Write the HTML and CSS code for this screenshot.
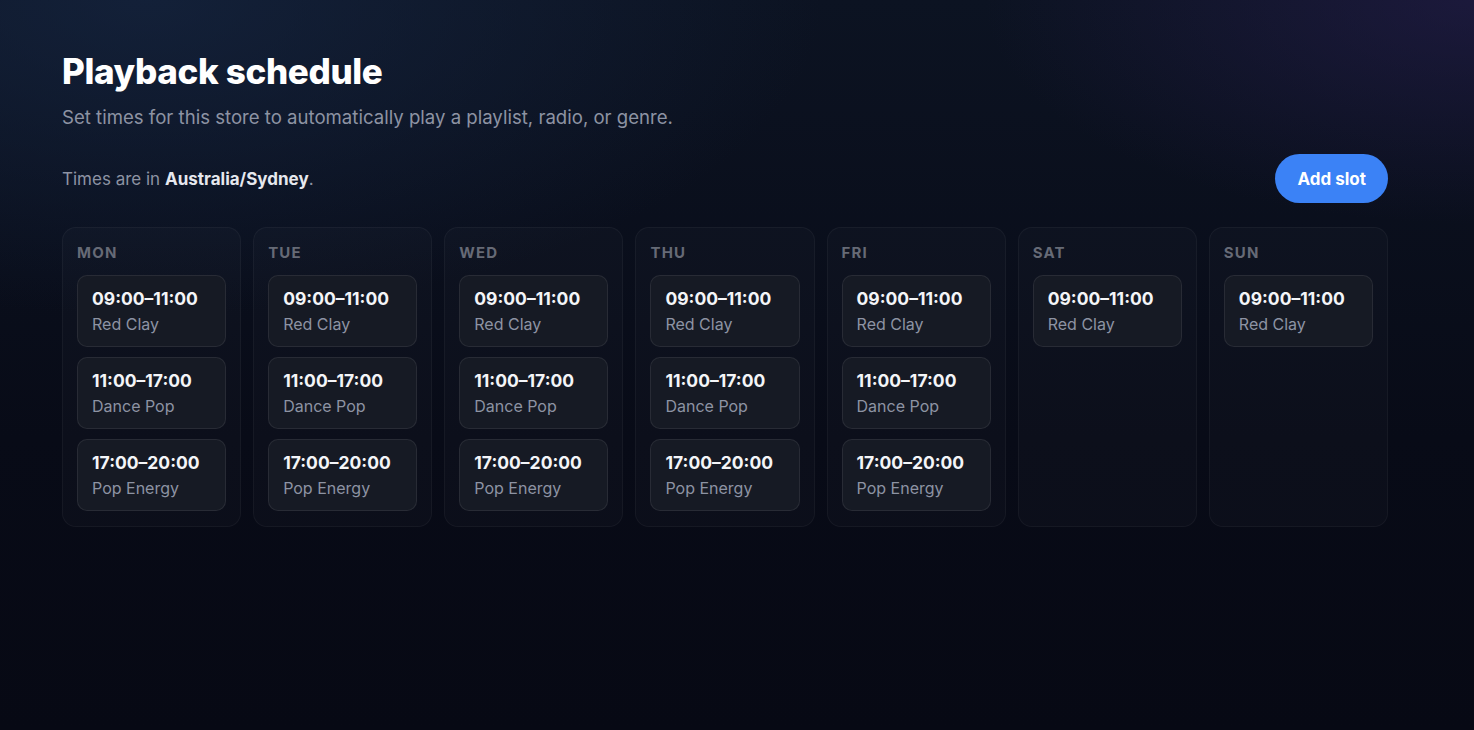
FILE: index.html
```html
<!DOCTYPE html>
<html lang="en">
<head>
    <meta charset="UTF-8">
    <meta name="viewport" content="width=device-width, initial-scale=1.0">
    <title>Playback schedule</title>
    <link rel="stylesheet" href="styles.css">
</head>
<body>
    <main class="page">
        <h1 class="title">Playback schedule</h1>
        <p class="subtitle">Set times for this store to automatically play a playlist, radio, or genre.</p>

        <div class="toolbar">
            <p class="tz">Times are in <strong>Australia/Sydney</strong>.</p>
            <button class="add-btn" type="button">Add slot</button>
        </div>

        <div class="week">
            <section class="day">
                <h2 class="day-name">MON</h2>
                <div class="slot"><div class="slot-time">09:00–11:00</div><div class="slot-name">Red Clay</div></div>
                <div class="slot"><div class="slot-time">11:00–17:00</div><div class="slot-name">Dance Pop</div></div>
                <div class="slot"><div class="slot-time">17:00–20:00</div><div class="slot-name">Pop Energy</div></div>
            </section>
            <section class="day">
                <h2 class="day-name">TUE</h2>
                <div class="slot"><div class="slot-time">09:00–11:00</div><div class="slot-name">Red Clay</div></div>
                <div class="slot"><div class="slot-time">11:00–17:00</div><div class="slot-name">Dance Pop</div></div>
                <div class="slot"><div class="slot-time">17:00–20:00</div><div class="slot-name">Pop Energy</div></div>
            </section>
            <section class="day">
                <h2 class="day-name">WED</h2>
                <div class="slot"><div class="slot-time">09:00–11:00</div><div class="slot-name">Red Clay</div></div>
                <div class="slot"><div class="slot-time">11:00–17:00</div><div class="slot-name">Dance Pop</div></div>
                <div class="slot"><div class="slot-time">17:00–20:00</div><div class="slot-name">Pop Energy</div></div>
            </section>
            <section class="day">
                <h2 class="day-name">THU</h2>
                <div class="slot"><div class="slot-time">09:00–11:00</div><div class="slot-name">Red Clay</div></div>
                <div class="slot"><div class="slot-time">11:00–17:00</div><div class="slot-name">Dance Pop</div></div>
                <div class="slot"><div class="slot-time">17:00–20:00</div><div class="slot-name">Pop Energy</div></div>
            </section>
            <section class="day">
                <h2 class="day-name">FRI</h2>
                <div class="slot"><div class="slot-time">09:00–11:00</div><div class="slot-name">Red Clay</div></div>
                <div class="slot"><div class="slot-time">11:00–17:00</div><div class="slot-name">Dance Pop</div></div>
                <div class="slot"><div class="slot-time">17:00–20:00</div><div class="slot-name">Pop Energy</div></div>
            </section>
            <section class="day">
                <h2 class="day-name">SAT</h2>
                <div class="slot"><div class="slot-time">09:00–11:00</div><div class="slot-name">Red Clay</div></div>
            </section>
            <section class="day">
                <h2 class="day-name">SUN</h2>
                <div class="slot"><div class="slot-time">09:00–11:00</div><div class="slot-name">Red Clay</div></div>
            </section>
        </div>
    </main>
</body>
</html>
```

FILE: styles.css
```css
html, body {
    margin: 0;
    padding: 0;
    height: 100%;
}
body {
    font-family: Inter, "Noto Sans", Arial, sans-serif;
    color: #e8eaf0;
    background:
        radial-gradient(ellipse 700px 320px at 100% 0%, rgba(40, 30, 80, 0.55), transparent 70%),
        radial-gradient(ellipse 900px 420px at 10% 0%, rgba(22, 38, 66, 0.7), transparent 75%),
        linear-gradient(180deg, #0c1322 0%, #080b17 60%, #070914 100%);
    min-height: 730px;
}
.page {
    padding: 50px 86px 0 62px;
}
.title {
    margin: 0;
    font-size: 35px;
    font-weight: 800;
    letter-spacing: -0.01em;
    color: #ffffff;
    line-height: 42px;
}
.subtitle {
    margin: 13px 0 0;
    font-size: 18.6px;
    color: #8d93a3;
    line-height: 24px;
}
.toolbar {
    display: flex;
    align-items: center;
    justify-content: space-between;
    margin-top: 25px;
}
.tz {
    margin: 0;
    font-size: 17px;
    color: #8d93a3;
}
.tz strong {
    color: #e6e8ee;
    font-weight: 700;
}
.add-btn {
    font-family: inherit;
    background: #3b82f6;
    color: #fff;
    border: none;
    border-radius: 999px;
    height: 49px;
    padding: 0 22px;
    font-size: 17px;
    font-weight: 700;
    cursor: pointer;
}
.week {
    display: grid;
    grid-template-columns: repeat(7, 1fr);
    gap: 12px;
    margin-top: 24px;
}
.day {
    display: flex;
    flex-direction: column;
    gap: 10px;
    padding: 13px 14px 14px;
    min-height: 271px;
    background: rgba(255, 255, 255, 0.018);
    border: 1px solid rgba(255, 255, 255, 0.045);
    border-radius: 14px;
}
.day-name {
    margin: 2px 0 2px 0;
    font-size: 15px;
    font-weight: 700;
    letter-spacing: 0.08em;
    color: #666a76;
    line-height: 20px;
}
.slot {
    height: 72px;
    box-sizing: border-box;
    padding: 12px 14px 0;
    background: #161a24;
    border: 1px solid rgba(255, 255, 255, 0.08);
    border-radius: 10px;
}
.slot-time {
    font-size: 17.5px;
    font-weight: 700;
    color: #f4f5f8;
    line-height: 22px;
}
.slot-name {
    margin-top: 4px;
    font-size: 16px;
    color: #8d93a3;
    line-height: 20px;
}
```
